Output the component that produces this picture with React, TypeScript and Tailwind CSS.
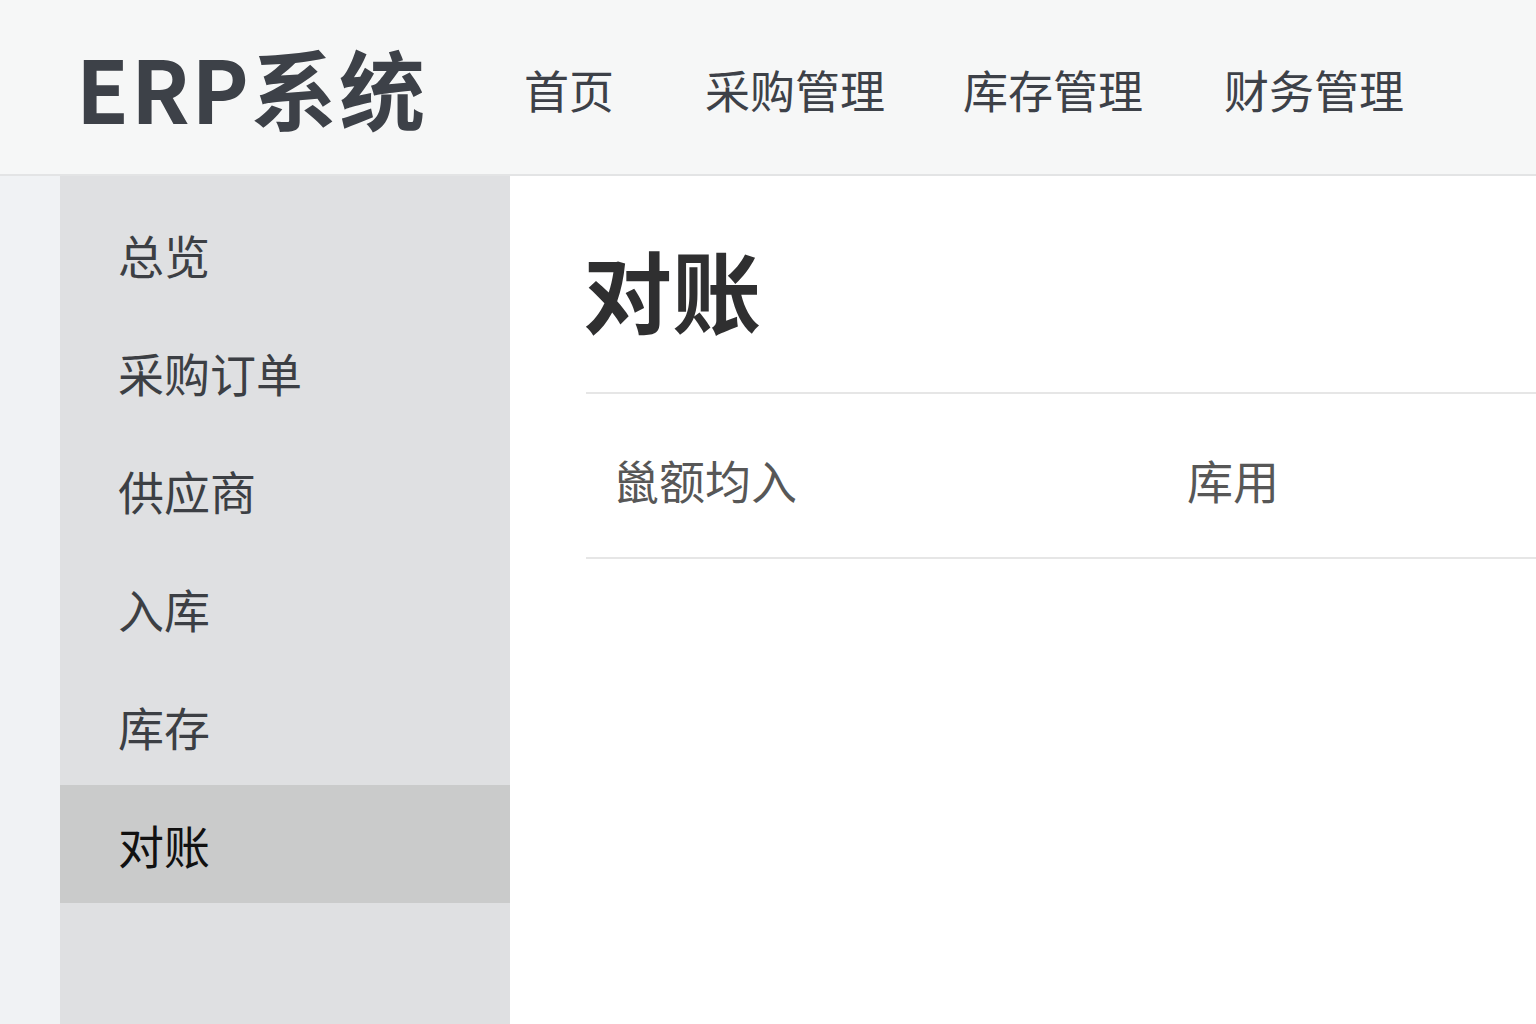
import React from 'react';

const navItems = [
  { label: '首页', gap: 'ml-0' },
  { label: '采购管理', gap: 'ml-[91px]' },
  { label: '库存管理', gap: 'ml-[78px]' },
  { label: '财务管理', gap: 'ml-[81px]' },
];
const sideItems = ['总览', '采购订单', '供应商', '入库', '库存', '对账'];

const App: React.FC = () => {
  const active = '对账';

  return (
    <div
      className="w-[1536px] h-[1024px] overflow-hidden flex flex-col bg-white"
      style={{ fontFamily: '"Noto Sans CJK SC", "Noto Sans", sans-serif' }}
    >
      <header className="h-[176px] shrink-0 flex items-center bg-[#f6f7f7] border-b-2 border-[#e3e4e5] pl-[76px]">
        <h1 className="text-[86px] leading-none font-bold text-[#3d4148] tracking-[2px]">ERP系统</h1>
        <nav className="flex items-center ml-[97px] mt-[4px]">
          {navItems.map(item => (
            <span key={item.label} className={`${item.gap} text-[45px] leading-none text-[#3d4148]`}>
              {item.label}
            </span>
          ))}
        </nav>
      </header>

      <div className="flex flex-1 min-h-0">
        <div className="w-[60px] shrink-0 bg-[#f0f2f4]" />
        <aside className="w-[450px] shrink-0 bg-[#dfe0e2] pt-[19px]">
          {sideItems.map(item => (
            <div
              key={item}
              className={`h-[118px] flex items-center pl-[58px] text-[46px] leading-none ${
                item === active ? 'bg-[#cacbcb] text-[#111111] h-[116px]' : 'text-[#3c3f44]'
              }`}
            >
              {item}
            </div>
          ))}
        </aside>

        <main className="flex-1 pl-[76px] pt-[68px]">
          <h2 className="text-[89px] leading-none font-bold text-[#2f2f30] -ml-[3px]">对账</h2>
          <div className="mt-[59px] border-t-2 border-b-2 border-[#e6e6e6] h-[167px] flex items-center pt-[6px]">
            <div className="w-[601px] pl-[27px] text-[46px] leading-none text-[#575757]">巤额均入</div>
            <div className="text-[46px] leading-none text-[#575757]">库用</div>
          </div>
        </main>
      </div>
    </div>
  );
};

export default App;
